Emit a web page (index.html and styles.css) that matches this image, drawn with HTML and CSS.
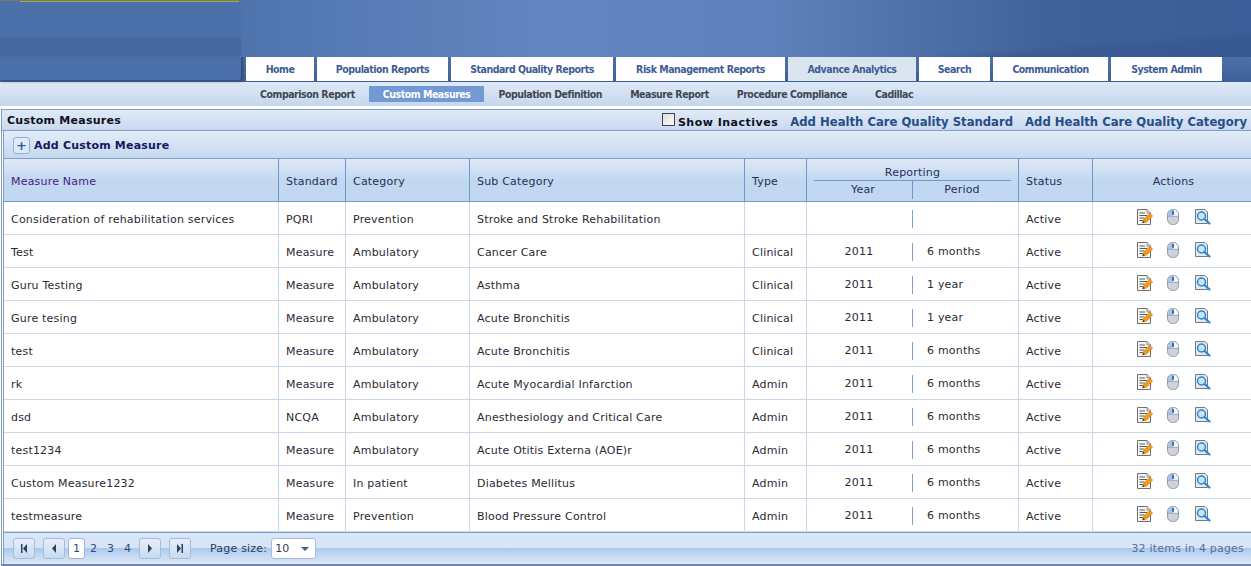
FILE: index.html
```html
<!DOCTYPE html>
<html lang="en">
<head>
<meta charset="utf-8">
<title>Custom Measures</title>
<link rel="stylesheet" href="styles.css">
</head>
<body>
<svg class="defs" width="0" height="0" aria-hidden="true">
  <symbol id="i-edit" viewBox="0 0 16 16">
    <path d="M.5 .5H10L13.500 4V15.500H.5Z" fill="#f6f6f0" stroke="#6f6f70"/>
    <path d="M10 .5V4H13.500" fill="#d9d9d2" stroke="#6f6f70" stroke-width=".7"/>
    <path d="M2.500 4H8M2.500 6.500H10M2.500 9H7.500M2.500 11.500H6" stroke="#5a5e64" fill="none"/>
    <path d="M5.500 14L6.800 10.300 12.800 4.300 15.700 7 9.600 13Z" fill="#f39a18" stroke="#c66f0c" stroke-width=".5"/>
    <path d="M5.500 14L6.300 11.700 7.800 13.200Z" fill="#2f2f2f"/>
  </symbol>
  <symbol id="i-mouse" viewBox="0 0 16 16">
    <rect x="1.500" y=".5" width="11" height="15" rx="5" fill="#cfd3d9" stroke="#8f9aa8"/>
    <path d="M7 1A4.600 4.600 0 0 0 2 5.500V7H7Z" fill="#a9c6e8"/>
    <path d="M7 1A4.600 4.600 0 0 1 12 5.500V7H7Z" fill="#f4f6f8"/>
    <path d="M2 7.300H12" stroke="#8f9aa8" stroke-width=".7"/>
    <rect x="6" y="1.500" width="2" height="4.500" rx="1" fill="#2f6db8"/>
  </symbol>
  <symbol id="i-view" viewBox="0 0 16 16">
    <path d="M.5 .5H10L12.500 3V14.500H.5Z" fill="#e6e9ec" stroke="#747b80"/>
    <circle cx="6.500" cy="7" r="4" fill="#c6e4fa" stroke="#2a86d4" stroke-width="1.500"/>
    <path d="M9.500 10L14.500 14.500" stroke="#2a86d4" stroke-width="2.200" stroke-linecap="round"/>
  </symbol>
</svg>

<header class="masthead">
  <div class="logo-block"></div>
  <div class="masthead-main">
    <div class="banner"></div>
    <nav class="tabs">
      <a class="tab tab-home">Home</a>
      <a class="tab tab-pop">Population Reports</a>
      <a class="tab tab-std">Standard Quality Reports</a>
      <a class="tab tab-risk">Risk Management Reports</a>
      <a class="tab tab-adv tab-current">Advance Analytics</a>
      <a class="tab tab-search">Search</a>
      <a class="tab tab-comm">Communication</a>
      <a class="tab tab-sys">System Admin</a>
    </nav>
  </div>
</header>

<nav class="subnav">
  <a class="sub">Comparison Report</a>
  <a class="sub sub-active">Custom Measures</a>
  <a class="sub">Population Definition</a>
  <a class="sub">Measure Report</a>
  <a class="sub">Procedure Compliance</a>
  <a class="sub">Cadillac</a>
</nav>

<main class="panel">
  <div class="panel-title">
    <h1>Custom Measures</h1>
    <div class="panel-links">
      <label class="inactive"><span class="check"></span>Show Inactives</label>
      <a class="big-link">Add Health Care Quality Standard</a>
      <a class="big-link">Add Health Care Quality Category</a>
    </div>
  </div>
  <div class="grid-wrap">
    <div class="toolbar">
      <span class="plus">+</span><a class="add">Add Custom Measure</a>
    </div>
    <table class="grid">
      <colgroup>
        <col class="c1"><col class="c2"><col class="c3"><col class="c4"><col class="c5"><col class="c6"><col class="c7"><col>
      </colgroup>
      <thead>
        <tr>
          <th class="name-h">Measure Name</th>
          <th>Standard</th>
          <th>Category</th>
          <th>Sub Category</th>
          <th>Type</th>
          <th class="rep-h">
            <div class="rep-title">Reporting</div>
            <div class="rep-cols"><span>Year</span><span class="rep-right">Period</span></div>
          </th>
          <th>Status</th>
          <th class="act-h">Actions</th>
        </tr>
      </thead>
      <tbody>
        <tr><td>Consideration of rehabilitation services</td><td>PQRI</td><td>Prevention</td><td>Stroke and Stroke Rehabilitation</td><td></td><td class="rep"><div class="rep-row"><span></span><span class="rep-right"></span></div></td><td>Active</td><td class="act"><div class="icons"><svg class="ic"><use href="#i-edit"/></svg><svg class="ic"><use href="#i-mouse"/></svg><svg class="ic"><use href="#i-view"/></svg></div></td></tr>
        <tr><td>Test</td><td>Measure</td><td>Ambulatory</td><td>Cancer Care</td><td>Clinical</td><td class="rep"><div class="rep-row"><span>2011</span><span class="rep-right">6 months</span></div></td><td>Active</td><td class="act"><div class="icons"><svg class="ic"><use href="#i-edit"/></svg><svg class="ic"><use href="#i-mouse"/></svg><svg class="ic"><use href="#i-view"/></svg></div></td></tr>
        <tr><td>Guru Testing</td><td>Measure</td><td>Ambulatory</td><td>Asthma</td><td>Clinical</td><td class="rep"><div class="rep-row"><span>2011</span><span class="rep-right">1 year</span></div></td><td>Active</td><td class="act"><div class="icons"><svg class="ic"><use href="#i-edit"/></svg><svg class="ic"><use href="#i-mouse"/></svg><svg class="ic"><use href="#i-view"/></svg></div></td></tr>
        <tr><td>Gure tesing</td><td>Measure</td><td>Ambulatory</td><td>Acute Bronchitis</td><td>Clinical</td><td class="rep"><div class="rep-row"><span>2011</span><span class="rep-right">1 year</span></div></td><td>Active</td><td class="act"><div class="icons"><svg class="ic"><use href="#i-edit"/></svg><svg class="ic"><use href="#i-mouse"/></svg><svg class="ic"><use href="#i-view"/></svg></div></td></tr>
        <tr><td>test</td><td>Measure</td><td>Ambulatory</td><td>Acute Bronchitis</td><td>Clinical</td><td class="rep"><div class="rep-row"><span>2011</span><span class="rep-right">6 months</span></div></td><td>Active</td><td class="act"><div class="icons"><svg class="ic"><use href="#i-edit"/></svg><svg class="ic"><use href="#i-mouse"/></svg><svg class="ic"><use href="#i-view"/></svg></div></td></tr>
        <tr><td>rk</td><td>Measure</td><td>Ambulatory</td><td>Acute Myocardial Infarction</td><td>Admin</td><td class="rep"><div class="rep-row"><span>2011</span><span class="rep-right">6 months</span></div></td><td>Active</td><td class="act"><div class="icons"><svg class="ic"><use href="#i-edit"/></svg><svg class="ic"><use href="#i-mouse"/></svg><svg class="ic"><use href="#i-view"/></svg></div></td></tr>
        <tr><td>dsd</td><td>NCQA</td><td>Ambulatory</td><td>Anesthesiology and Critical Care</td><td>Admin</td><td class="rep"><div class="rep-row"><span>2011</span><span class="rep-right">6 months</span></div></td><td>Active</td><td class="act"><div class="icons"><svg class="ic"><use href="#i-edit"/></svg><svg class="ic"><use href="#i-mouse"/></svg><svg class="ic"><use href="#i-view"/></svg></div></td></tr>
        <tr><td>test1234</td><td>Measure</td><td>Ambulatory</td><td>Acute Otitis Externa (AOE)r</td><td>Admin</td><td class="rep"><div class="rep-row"><span>2011</span><span class="rep-right">6 months</span></div></td><td>Active</td><td class="act"><div class="icons"><svg class="ic"><use href="#i-edit"/></svg><svg class="ic"><use href="#i-mouse"/></svg><svg class="ic"><use href="#i-view"/></svg></div></td></tr>
        <tr><td>Custom Measure1232</td><td>Measure</td><td>In patient</td><td>Diabetes Mellitus</td><td>Admin</td><td class="rep"><div class="rep-row"><span>2011</span><span class="rep-right">6 months</span></div></td><td>Active</td><td class="act"><div class="icons"><svg class="ic"><use href="#i-edit"/></svg><svg class="ic"><use href="#i-mouse"/></svg><svg class="ic"><use href="#i-view"/></svg></div></td></tr>
        <tr><td>testmeasure</td><td>Measure</td><td>Prevention</td><td>Blood Pressure Control</td><td>Admin</td><td class="rep"><div class="rep-row"><span>2011</span><span class="rep-right">6 months</span></div></td><td>Active</td><td class="act"><div class="icons"><svg class="ic"><use href="#i-edit"/></svg><svg class="ic"><use href="#i-mouse"/></svg><svg class="ic"><use href="#i-view"/></svg></div></td></tr>
      </tbody>
    </table>
    <footer class="pager">
      <div class="pager-left">
        <button class="pbtn"><svg viewBox="0 0 8 9" class="pi"><path d="M1 0H2.500V9H1ZM7 0V9L3 4.500Z"/></svg></button>
        <button class="pbtn"><svg viewBox="0 0 8 9" class="pi"><path d="M6 0V9L2 4.500Z"/></svg></button>
        <div class="pages"><span class="page page-on">1</span><span class="page">2</span><span class="page">3</span><span class="page">4</span></div>
        <button class="pbtn"><svg viewBox="0 0 8 9" class="pi"><path d="M2 0V9L6 4.500Z"/></svg></button>
        <button class="pbtn"><svg viewBox="0 0 8 9" class="pi"><path d="M1 0V9L5 4.500ZM5.500 0H7V9H5.500Z"/></svg></button>
        <span class="size-label">Page size:</span>
        <div class="select"><span>10</span><i class="caret"></i></div>
      </div>
      <div class="count">32 items in 4 pages</div>
    </footer>
  </div>
</main>
</body>
</html>
```

FILE: styles.css
```css
* { box-sizing: border-box; }
html, body { margin: 0; padding: 0; }
body {
  width: 1251px;
  height: 566px;
  overflow: hidden;
  background: #fff;
  font-family: "DejaVu Sans", Verdana, sans-serif;
  font-size: 11px;
  letter-spacing: .2px;
  color: #1d1d2b;
}
.defs { position: absolute; }

/* masthead */
.masthead {
  display: flex;
  height: 82px;
  background: linear-gradient(180deg, #6281b8 0, #5577b0 60%, #3e5f99 100%);
  border-bottom: 1px solid #3e6097;
}
.logo-block {
  flex: none;
  width: 241px;
  height: 80px;
  background:
    linear-gradient(90deg, #7a7860, #7a7860) 0 0 / 100% 1px no-repeat,
    linear-gradient(90deg, #9db04a, #9db04a) 20px 1px / 219px 1px no-repeat,
    linear-gradient(180deg, #4c70a9 0, #4c70a9 37px, #46689f 38px, #46689f 56px, #4c70a9 57px, #4c70a9 100%);
  border-radius: 0 0 3px 0;
  box-shadow: 2px 1px 3px #34496e;
}
.masthead-main { flex: 1; display: flex; flex-direction: column; padding-left: 5px; }
.banner {
  height: 57px;
  margin-left: -5px;
  background:
    linear-gradient(176deg, rgba(0,0,0,0) 0, rgba(0,0,0,0) 80%, rgba(45,75,130,.3) 86%, rgba(45,75,130,.3) 100%),
    linear-gradient(90deg, #4f74ad 0, #6486c0 30%, #5f82bc 52%, #3f6299 80%, #3b5e98 100%);
}
.tabs { display: flex; gap: 3px; height: 24px; }
.tab {
  display: flex;
  align-items: center;
  justify-content: center;
  background: #fff;
  color: #3c5c94;
  font-family: "DejaVu Sans Condensed", "DejaVu Sans", sans-serif;
  font-size: 10.500px;
  letter-spacing: -.5px;
  font-weight: 700;
}
.tab-current { background: #dbe5f0; }
.tab-home { width: 68px; }
.tab-pop { width: 131px; }
.tab-std { width: 162px; }
.tab-risk { width: 169px; }
.tab-adv { width: 128px; }
.tab-search { width: 71px; }
.tab-comm { width: 115px; }
.tab-sys { width: 111px; }

/* sub navigation */
.subnav {
  display: flex;
  align-items: center;
  height: 24px;
  padding-left: 246px;
  background: linear-gradient(180deg, #dfe9f6 0, #c5d7ee 100%);
}
.sub {
  display: flex;
  align-items: center;
  height: 16px;
  padding: 0 14px;
  color: #3f4650;
  font-family: "DejaVu Sans Condensed", "DejaVu Sans", sans-serif;
  font-size: 10.500px;
  letter-spacing: -.46px;
  font-weight: 700;
}
.sub-active { background: #7299d3; color: #fff; }

/* panel */
.panel {
  margin: 3px 0 0 1px;
  height: 457px;
  border: 1px solid #7f9fc6;
  border-right: 0;
  border-bottom: 2px solid #6f86a6;
}
.panel-title {
  display: flex;
  justify-content: space-between;
  align-items: center;
  height: 21px;
  padding: 0 4px 0 5px;
  background: linear-gradient(180deg, #e0eaf7 0, #c9daf0 100%);
  border-bottom: 1px solid #7f9fc6;
}
.panel-title h1 {
  margin: 0;
  font-size: 11px;
  font-weight: 700;
  letter-spacing: .25px;
  color: #10101e;
}
.panel-links { display: flex; align-items: center; padding-top: 3px; }
.inactive { display: flex; align-items: center; padding-top: 1px; font-weight: 700; letter-spacing: .5px; color: #10101e; margin-right: 12px; }
.check {
  width: 13px;
  height: 13px;
  margin: -5px 3px 0 0;
  border: 1px solid #3c4654;
  background: linear-gradient(135deg, #dfe0dc, #fafafa);
}
.big-link { font-size: 11.650px; letter-spacing: 0; font-weight: 700; color: #264d86; margin-left: 12px; }
.big-link:first-of-type { margin-left: 0; }
.grid-wrap { margin-left: 1px; border-left: 1px solid #7f9fc6; }

.toolbar {
  display: flex;
  align-items: center;
  height: 28px;
  padding: 2px 0 0 9px;
  background: linear-gradient(180deg, #e3ecf8 0, #c6d8ef 100%);
  border-bottom: 1px solid #7f9fc6;
}
.plus {
  display: flex;
  align-items: center;
  justify-content: center;
  width: 17px;
  height: 17px;
  margin-right: 4px;
  border: 1px solid #92aed2;
  border-radius: 3px;
  background: #dfeaf8;
  color: #2f5aa8;
  font-size: 13px;
  font-weight: 700;
  line-height: 1;
}
.add { font-weight: 700; color: #14185f; }

/* table */
.grid {
  width: 1248px;
  table-layout: fixed;
  border-collapse: separate;
  border-spacing: 0;
}
.c1 { width: 275px; }
.c2 { width: 67px; }
.c3 { width: 124px; }
.c4 { width: 275px; }
.c5 { width: 62px; }
.c6 { width: 212px; }
.c7 { width: 74px; }
.grid th {
  height: 43px;
  padding: 2px 7px 0;
  font-weight: 400;
  text-align: left;
  color: #26305c;
  background: linear-gradient(180deg, #dfe9f6 0, #c2d7f0 50%, #c2d7f0 100%);
  border-right: 1px solid #6d97cd;
  border-bottom: 1px solid #6d97cd;
}
.grid th:last-child, .grid td:last-child { border-right: 0; }
.grid th.name-h { color: #4a1a80; }
.grid th.act-h { text-align: center; padding-left: 9px; }
.grid td {
  height: 33px;
  padding: 2px 7px 0;
  color: #2a2a34;
  white-space: nowrap;
  border-right: 1px solid #cbd7e8;
  border-bottom: 1px solid #cbd7e8;
}
.grid th.rep-h { padding: 7px 7px 0; vertical-align: top; }
.rep-title { height: 15px; text-align: center; border-bottom: 1px solid #6d97cd; line-height: 14px; }
.rep-cols { display: grid; grid-template-columns: 98px 1fr; height: 16px; line-height: 18px; text-align: center; }
.rep-cols .rep-right { border-left: 1px solid #6d97cd; }
.rep-row { display: grid; grid-template-columns: 98px 1fr; height: 18px; line-height: 18px; text-align: center; }
.rep-row span:first-child { padding-right: 8px; }
.rep-row .rep-right { border-left: 1px solid #7fa0cc; text-align: left; padding-left: 14px; }
.grid td.act { padding: 0 0 2px; }
.icons { display: flex; padding-left: 44px; }
.ic { width: 16px; height: 16px; display: block; margin-right: 13px; }

/* pager */
.pager {
  display: flex;
  justify-content: space-between;
  align-items: center;
  height: 32px;
  padding: 0 7px 0 9px;
  background: linear-gradient(180deg, #d7e5f7 0, #d7e5f7 49%, #abc9ee 50%, #c3d8f2 72%, #dce8f7 100%);
  border-top: 1px solid #7f9fc6;
  color: #2a3b60;
}
.pager-left { display: flex; align-items: center; }
.pbtn {
  display: flex;
  align-items: center;
  justify-content: center;
  width: 22px;
  height: 21px;
  padding: 0;
  margin-right: 8px;
  border: 1px solid #a7bcd8;
  border-radius: 3px;
  background: linear-gradient(180deg, #e6eefa, #c9daf1);
}
.pi { width: 8px; height: 9px; fill: #2f4160; }
.pages { display: flex; align-items: center; margin: 0 3px 0 -5px; }
.page { width: 17px; text-align: center; color: #2c4a86; }
.page-on {
  height: 21px;
  line-height: 19px;
  background: #fff;
  border: 1px solid #9db5d6;
  border-radius: 3px;
}
.size-label { margin-left: 11px; }
.select {
  display: flex;
  justify-content: space-between;
  align-items: center;
  width: 45px;
  height: 21px;
  margin-left: 4px;
  padding: 0 6px 0 3px;
  background: #fff;
  border: 1px solid #a7bcd8;
  border-radius: 3px;
}
.caret {
  border-left: 4px solid transparent;
  border-right: 4px solid transparent;
  border-top: 4px solid #4b5f80;
}
.count { color: #536f9d; }
```
